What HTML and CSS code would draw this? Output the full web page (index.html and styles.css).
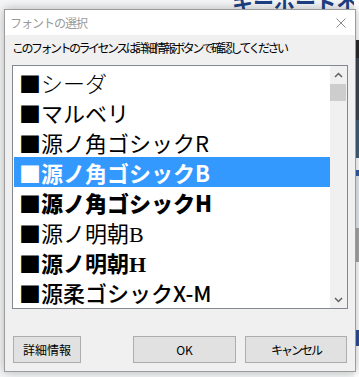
FILE: index.html
```html
<!DOCTYPE html>
<html lang="ja">
<head>
  <meta charset="UTF-8">
  <title>フォントの選択</title>
  <link rel="stylesheet" href="styles.css">
</head>
<body>
  <div class="backdrop">
    <div class="bg-heading">キーボード不透明</div>
    <div class="bg-side"></div>
  </div>

  <div class="dialog">
    <div class="titlebar">
      <span class="title">フォントの選択</span>
      <svg class="close" width="10" height="10" viewBox="0 0 10 10">
        <path d="M0.5 0.5 L9.5 9.5 M9.5 0.5 L0.5 9.5" stroke="#8a8a8a" stroke-width="1" fill="none"/>
      </svg>
    </div>

    <div class="content">
      <p class="notice">このフォントのライセンスは詳細情報ボタンで確認してください</p>

      <div class="listbox">
        <ul class="fonts">
          <li class="f-light"><span class="mark">■</span>シーダ</li>
          <li><span class="mark">■</span>マルベリ</li>
          <li><span class="mark">■</span>源ノ角ゴシックR</li>
          <li class="f-bold selected"><span class="mark">■</span>源ノ角ゴシックB</li>
          <li class="f-heavy"><span class="mark">■</span>源ノ角ゴシックH</li>
          <li class="f-serif"><span class="mark">■</span>源ノ明朝B</li>
          <li class="f-serif f-bold"><span class="mark">■</span>源ノ明朝H</li>
          <li class="f-medium"><span class="mark">■</span>源柔ゴシックX-M</li>
        </ul>
        <div class="scrollbar">
          <div class="arrow">
            <svg width="9" height="6" viewBox="0 0 9 6"><path d="M1 5 L4.5 1.5 L8 5" stroke="#606060" stroke-width="1.5" fill="none"/></svg>
          </div>
          <div class="thumb"></div>
          <div class="track"></div>
          <div class="arrow">
            <svg width="9" height="6" viewBox="0 0 9 6"><path d="M1 1 L4.5 4.5 L8 1" stroke="#606060" stroke-width="1.5" fill="none"/></svg>
          </div>
        </div>
      </div>

      <div class="buttons">
        <button class="btn btn-info">詳細情報</button>
        <button class="btn btn-ok">OK</button>
        <button class="btn btn-cancel">キャンセル</button>
      </div>
    </div>
  </div>
</body>
</html>
```

FILE: styles.css
```css
body {
  margin: 0;
  width: 359px;
  height: 377px;
  overflow: hidden;
  position: relative;
  background-color: #f5f6f7;
  font-family: "Noto Sans CJK JP", sans-serif;
}

/* page behind the dialog */
.backdrop {
  position: absolute;
  inset: 0;
}

.bg-heading {
  position: absolute;
  left: 232px;
  top: -14px;
  font-size: 21px;
  font-weight: bold;
  color: #1d3f84;
  white-space: nowrap;
}

.bg-side {
  position: absolute;
  right: 0;
  top: 0;
  width: 5px;
  height: 377px;
  background: linear-gradient(to bottom,
    #ffffff 0, #ffffff 40px,
    #2a2a2a 40px, #2a2a2a 58px,
    #3c4652 58px, #3c4652 120px,
    #44607a 120px, #44607a 158px,
    #ffffff 158px, #ffffff 170px,
    #2f5fa8 170px, #2f5fa8 176px,
    #e8eef5 176px, #e8eef5 228px,
    #a8a8a8 228px, #a8a8a8 262px,
    #ffffff 262px, #ffffff 330px,
    #2c4f9a 330px, #2c4f9a 346px,
    #ffffff 346px);
}

/* dialog window */
.dialog {
  position: absolute;
  left: 4px;
  top: 9px;
  width: 352px;
  height: 363px;
  box-sizing: border-box;
  border: 1px solid #9c9c9c;
  background-color: #f0f0f0;
  box-shadow: 0 0 10px rgba(0,0,0,0.28);
  display: flex;
  flex-direction: column;
}

.titlebar {
  height: 25px;
  background-color: #ffffff;
  display: flex;
  align-items: center;
  justify-content: space-between;
  padding: 0 9px 0 5px;
}

.title {
  font-size: 12px;
  color: #9a9a9a;
  letter-spacing: -1px;
}

.close {
  display: block;
}

.content {
  flex: 1;
  display: flex;
  flex-direction: column;
  padding: 0 6px 8px 7px;
}

.notice {
  margin: 5px 0 0;
  font-size: 12px;
  line-height: 16px;
  letter-spacing: -2.5px;
  color: #000;
  white-space: nowrap;
}

/* font list */
.listbox {
  margin-top: 9px;
  width: 336px;
  height: 244px;
  box-sizing: border-box;
  border: 1px solid #828790;
  background-color: #fff;
  display: flex;
}

.fonts {
  flex: 1;
  list-style: none;
  margin: 0;
  padding: 1px 0 0 1px;
  overflow: hidden;
}

.fonts li {
  height: 30px;
  line-height: 30px;
  font-size: 22px;
  padding-left: 5px;
  white-space: nowrap;
  color: #000;
}

.fonts li.selected {
  background-color: #3399ff;
  color: #fff;
}

.mark {
  font-family: "Noto Sans CJK JP", sans-serif;
  font-weight: normal;
}

.f-light { font-weight: 300; }
.f-medium { font-weight: 500; }
.f-bold { font-weight: bold; }
.f-heavy { font-weight: 900; }
.f-serif { font-family: "Liberation Serif", "Noto Sans CJK JP", serif; }

.scrollbar {
  width: 17px;
  background-color: #f0f0f0;
  display: flex;
  flex-direction: column;
}

.arrow {
  height: 17px;
  display: flex;
  align-items: center;
  justify-content: center;
}

.thumb {
  height: 17px;
  margin: 1px 1px 0 0;
  background-color: #cdcdcd;
}

.track {
  flex: 1;
}

/* buttons */
.buttons {
  margin-top: auto;
  display: flex;
  padding: 0 2px 0 1px;
}

.btn {
  height: 27px;
  box-sizing: border-box;
  border: 1px solid #adadad;
  background-color: #e1e1e1;
  font-family: "Noto Sans CJK JP", sans-serif;
  font-size: 12px;
  color: #000;
  padding: 0;
}

.btn-info {
  width: 68px;
}

.btn-ok {
  width: 103px;
  margin-left: auto;
}

.btn-cancel {
  width: 102px;
  margin-left: 9px;
  letter-spacing: -2px;
}
```
